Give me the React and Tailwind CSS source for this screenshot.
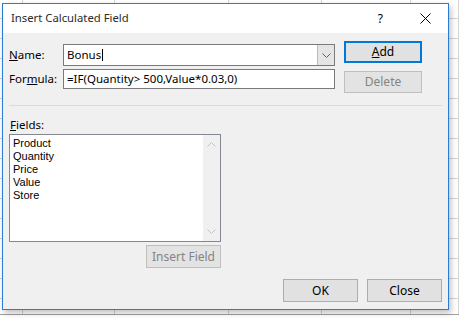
import React from 'react';

const columns = [23, 92, 114, 93, 89, 48];

const fields = ['Product', 'Quantity', 'Price', 'Value', 'Store'];

const Chevron = ({ up, color }) => (
    <svg width="9" height="5" viewBox="0 0 9 5" fill="none">
        <path d={up ? 'M0.5 4.5 L4.5 0.5 L8.5 4.5' : 'M0.5 0.5 L4.5 4.5 L8.5 0.5'} stroke={color} strokeWidth="1" />
    </svg>
);

const Button = ({ children, disabled, primary }) => (
    <button
        className={
            primary
                ? 'h-[22px] w-[78px] border-2 border-[#0078d7] bg-[#e1e1e1] text-[12px] text-black'
                : disabled
                ? 'h-[22px] w-[78px] border border-[#bfbfbf] bg-[#e3e3e3] text-[12px] text-[#838383]'
                : 'h-[23px] w-[75px] border border-[#adadad] bg-[#e1e1e1] text-[12px] text-black'
        }
    >
        {children}
    </button>
);

const App = () => {
    return (
        <div className="relative h-[326px] w-[459px] overflow-hidden bg-white font-['Noto_Sans',sans-serif]">
            {/* spreadsheet behind */}
            <div className="flex h-[315px] border-b border-[#a0a0a0]">
                {columns.map((w, i) => (
                    <div
                        key={i}
                        style={{ width: w }}
                        className="h-full shrink-0 border-r border-[#d4d4d4] bg-[repeating-linear-gradient(to_bottom,transparent_0px,transparent_18px,#d4d4d4_18px,#d4d4d4_19px,transparent_19px,transparent_20px)]"
                    />
                ))}
            </div>

            {/* dialog */}
            <div className="absolute left-[2px] top-[3px] flex h-[307px] w-[447px] flex-col border border-[#2b7bd3] bg-[#f0f0f0] shadow-[2px_3px_6px_rgba(0,0,0,0.25)]">
                <div className="flex h-[29px] items-center bg-white pl-[8px] pr-[17px] text-[11.3px] text-[#2b2b2b]">
                    <span>Insert Calculated Field</span>
                    <span className="ml-auto text-[12px] text-black">?</span>
                    <svg className="ml-[37px]" width="11" height="11" viewBox="0 0 11 11">
                        <path d="M0.5 0.5 L10.5 10.5 M10.5 0.5 L0.5 10.5" stroke="#000" strokeWidth="1" />
                    </svg>
                </div>

                <div className="flex flex-1 flex-col pb-[7px] text-[11.5px] text-black">
                    <div className="flex pl-[6px]">
                        <div className="mt-[11px] flex flex-col gap-[3px]">
                            <div className="flex items-center">
                                <span className="w-[54px]"><u>N</u>ame:</span>
                                <div className="flex h-[22px] w-[272px] border border-[#7a7a7a] bg-white">
                                    <div className="flex items-center pl-[3px]">
                                        Bonus
                                        <span className="ml-[1px] h-[12px] w-[1px] bg-black" />
                                    </div>
                                    <div className="ml-auto flex w-[17px] items-center justify-center border-l border-[#b9b9b9] bg-[#e5e5e5]">
                                        <Chevron color="#606060" />
                                    </div>
                                </div>
                            </div>
                            <div className="flex items-center">
                                <span className="w-[54px]">For<u>m</u>ula:</span>
                                <div className="flex h-[20px] w-[272px] items-center border border-[#7a7a7a] bg-white pl-[3px]">
                                    =IF(Quantity&gt; 500,Value*0.03,0)
                                </div>
                            </div>
                        </div>
                        <div className="ml-[9px] mt-[8px] flex flex-col gap-[8px]">
                            <Button primary><u>A</u>dd</Button>
                            <Button disabled>Delete</Button>
                        </div>
                    </div>

                    <div className="ml-[6px] mt-[12px] h-[1px] w-[433px] bg-[#dadada]" />

                    <div className="ml-[7px] mt-[11px] leading-[16px]"><u>F</u>ields:</div>

                    <div className="ml-[6px] flex w-[212px] flex-col items-end">
                        <div className="mt-[1px] flex h-[108px] w-full border border-[#828790] bg-white">
                            <div className="flex-1 pl-[3px] pt-[2px] font-['Liberation_Sans',sans-serif] text-[11px] leading-[13px]">
                                {fields.map((f) => (
                                    <div key={f}>{f}</div>
                                ))}
                            </div>
                            <div className="flex w-[17px] flex-col items-center justify-between bg-[#f0f0f0] py-[7px]">
                                <Chevron up color="#c4c4c4" />
                                <Chevron color="#c4c4c4" />
                            </div>
                        </div>
                        <div className="mt-[3px]">
                            <button className="h-[23px] w-[75px] border border-[#bfbfbf] bg-[#e3e3e3] text-[12px] text-[#838383]">
                                Insert Field
                            </button>
                        </div>
                    </div>

                    <div className="mt-auto flex justify-end gap-[9px] pr-[6px]">
                        <Button>OK</Button>
                        <Button>Close</Button>
                    </div>
                </div>
            </div>
        </div>
    );
};

export default App;
